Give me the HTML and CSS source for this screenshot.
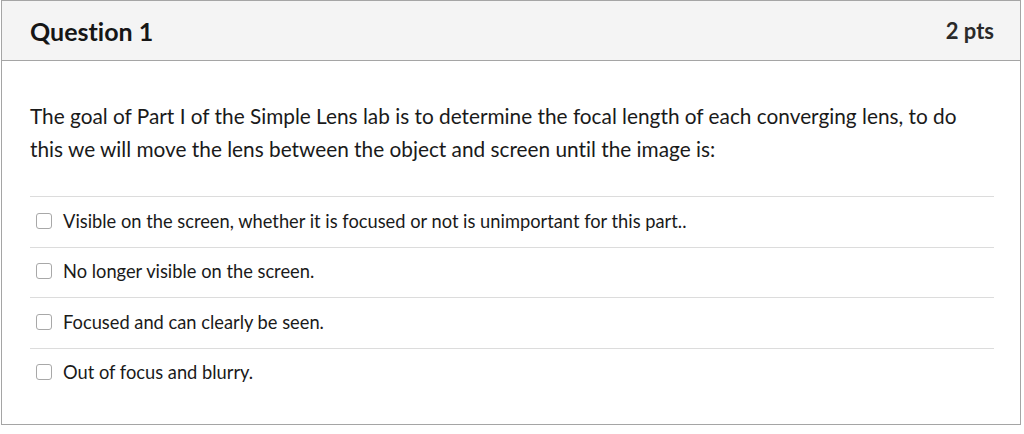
FILE: index.html
```html
<!DOCTYPE html>
<html>
<head>
<meta charset="utf-8">
<link rel="stylesheet" href="styles.css">
</head>
<body>
<div class="quiz">
  <div class="header">
    <h2 class="title">Question 1</h2>
    <span class="pts">2 pts</span>
  </div>
  <div class="content">
    <p class="question">The goal of Part I of the Simple Lens lab is to determine the focal length of each converging lens, to do this we will move the lens between the object and screen until the image is:</p>
    <div class="answers">
      <label class="answer"><span class="box"></span><span>Visible on the screen, whether it is focused or not is unimportant for this part..</span></label>
      <label class="answer"><span class="box"></span><span>No longer visible on the screen.</span></label>
      <label class="answer"><span class="box"></span><span>Focused and can clearly be seen.</span></label>
      <label class="answer"><span class="box"></span><span>Out of focus and blurry.</span></label>
    </div>
  </div>
</div>
</body>
</html>
```
FILE: styles.css
```css
html, body {
  margin: 0;
  padding: 0;
  background: #fff;
}
body {
  font-family: Lato, "Open Sans", sans-serif;
  font-variant-ligatures: none;
  color: #1a1a1a;
}
.quiz {
  margin-left: 1px;
  width: 1020px;
  height: 425px;
  box-sizing: border-box;
  border: 1px solid #a5a5a5;
  display: flex;
  flex-direction: column;
}
.header {
  height: 60px;
  box-sizing: border-box;
  background: #f4f4f4;
  border-bottom: 1px solid #a5a5a5;
  display: flex;
  align-items: center;
  justify-content: space-between;
  padding: 0 26px 0 28px;
}
.title {
  margin: 0;
  font-size: 25px;
  font-weight: 700;
  color: #161616;
}
.pts {
  font-size: 22px;
  font-weight: 700;
  color: #2a2a2a;
}
.content {
  padding: 0 26px 0 28px;
}
.question {
  margin: 38px 0 0;
  font-size: 20.8px;
  line-height: 33px;
  color: #1a1a1a;
}
.answers {
  margin-top: 31px;
}
.answer {
  display: flex;
  align-items: center;
  gap: 11px;
  height: 47.5px;
  padding-bottom: 2px;
  border-top: 1px solid #dcdcdc;
  font-size: 18.3px;
  color: #1a1a1a;
  padding-left: 6px;
}
.box {
  width: 14px;
  height: 14px;
  border: 1px solid #a8a8a8;
  border-radius: 3px;
  flex-shrink: 0;
}
```
